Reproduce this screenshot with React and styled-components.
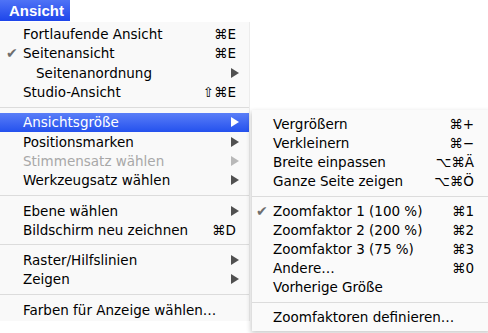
import React from 'react';
import styled, { createGlobalStyle } from 'styled-components';

const mainItems = [
  { label: 'Fortlaufende Ansicht', key: '⌘E' },
  { label: 'Seitenansicht', key: '⌘E', checked: true },
  { label: 'Seitenanordnung', arrow: true, indent: true },
  { label: 'Studio-Ansicht', key: '⇧⌘E' },
  { sep: true },
  { label: 'Ansichtsgröße', arrow: true, active: true },
  { label: 'Positionsmarken', arrow: true },
  { label: 'Stimmensatz wählen', arrow: true, disabled: true },
  { label: 'Werkzeugsatz wählen', arrow: true },
  { sep: true },
  { label: 'Ebene wählen', arrow: true },
  { label: 'Bildschirm neu zeichnen', key: '⌘D' },
  { sep: true },
  { label: 'Raster/Hilfslinien', arrow: true },
  { label: 'Zeigen', arrow: true },
  { sep: true },
  { label: 'Farben für Anzeige wählen…' },
];

const subItems = [
  { label: 'Vergrößern', key: '⌘+' },
  { label: 'Verkleinern', key: '⌘−' },
  { label: 'Breite einpassen', key: '⌥⌘Ä' },
  { label: 'Ganze Seite zeigen', key: '⌥⌘Ö' },
  { sep: true },
  { label: 'Zoomfaktor 1 (100 %)', key: '⌘1', checked: true },
  { label: 'Zoomfaktor 2 (200 %)', key: '⌘2' },
  { label: 'Zoomfaktor 3 (75 %)', key: '⌘3' },
  { label: 'Andere…', key: '⌘0' },
  { label: 'Vorherige Größe' },
  { sep: true },
  { label: 'Zoomfaktoren definieren…' },
];

function Arrow({ color }) {
  return (
    <svg width="8" height="10" viewBox="0 0 8 10">
      <polygon points="0,0 8,5 0,10" fill={color} />
    </svg>
  );
}

function Row({ item, children }) {
  const arrowColor = item.active ? '#fff' : item.disabled ? '#b8b8b8' : '#505050';
  return (
    <Item $active={item.active} $disabled={item.disabled}>
      <Check>{item.checked ? '✔' : ''}</Check>
      <Label $indent={item.indent}>{item.label}</Label>
      {item.key && <Shortcut>{item.key}</Shortcut>}
      {item.arrow && <Arrow color={arrowColor} />}
      {children}
    </Item>
  );
}

export default function App() {
  return (
    <>
      <GlobalStyle />
      <Page>
        <MenuBar>
          <Title>Ansicht</Title>
        </MenuBar>
        <Menu>
          {mainItems.map((item, i) =>
            item.sep ? (
              <Separator key={i} />
            ) : (
              <Row key={i} item={item}>
                {item.active && (
                  <SubMenu>
                    {subItems.map((sub, j) =>
                      sub.sep ? <Separator key={j} /> : <SubRow key={j}><Row item={sub} /></SubRow>
                    )}
                  </SubMenu>
                )}
              </Row>
            )
          )}
        </Menu>
      </Page>
    </>
  );
}

const GlobalStyle = createGlobalStyle`
  html, body {
    margin: 0;
    padding: 0;
    background: #fff;
    overflow: hidden;
  }
  body {
    font-family: 'DejaVu Sans', 'Liberation Sans', sans-serif;
    font-size: 13.5px;
    -webkit-font-smoothing: antialiased;
  }
`;

const Page = styled.div`
  width: 488px;
  height: 333px;
  position: relative;
`;

const MenuBar = styled.div`
  height: 21px;
  display: flex;
`;

const Title = styled.div`
  width: 61px;
  padding-left: 9px;
  height: 21px;
  display: flex;
  align-items: center;
  color: #fff;
  font-family: 'Liberation Sans', 'DejaVu Sans', sans-serif;
  font-weight: bold;
  font-size: 15px;
  background: linear-gradient(#4f73f6, #1d45ea);
`;

const Menu = styled.div`
  width: 250px;
  margin-top: 1px;
  padding: 2.5px 0 2px;
  background: #f9f9f9;
  border-right: 1px solid #ececec;
  box-sizing: border-box;
`;

const Item = styled.div`
  position: relative;
  display: flex;
  align-items: center;
  height: 19.3px;
  padding: 0 10px 0 6px;
  color: ${(p) => (p.$active ? '#fff' : p.$disabled ? '#a8a8a8' : '#000')};
  background: ${(p) => (p.$active ? 'linear-gradient(#5a7ef7, #2451ee)' : 'transparent')};
  white-space: nowrap;
`;

const Check = styled.span`
  width: 17px;
  flex: none;
  font-size: 14px;
  color: #6e6e6e;
`;

const Label = styled.span`
  flex: 1;
  margin-left: ${(p) => (p.$indent ? '13px' : '0')};
`;

const Shortcut = styled.span`
  margin-right: 3px;
`;

const Separator = styled.div`
  height: 11px;
  display: flex;
  align-items: center;
  &::after {
    content: '';
    flex: 1;
    height: 1px;
    background: #dcdcdc;
  }
`;

const SubRow = styled.div`
  & > div {
    height: 19px;
    padding-left: 4px;
    padding-right: 15px;
  }
`;

const SubMenu = styled.div`
  position: absolute;
  left: 252px;
  top: -2.7px;
  width: 240px;
  padding: 4.5px 0 4px;
  background: #fafafa;
  color: #000;
  box-shadow: -1px 2px 5px rgba(0, 0, 0, 0.22);
`;
